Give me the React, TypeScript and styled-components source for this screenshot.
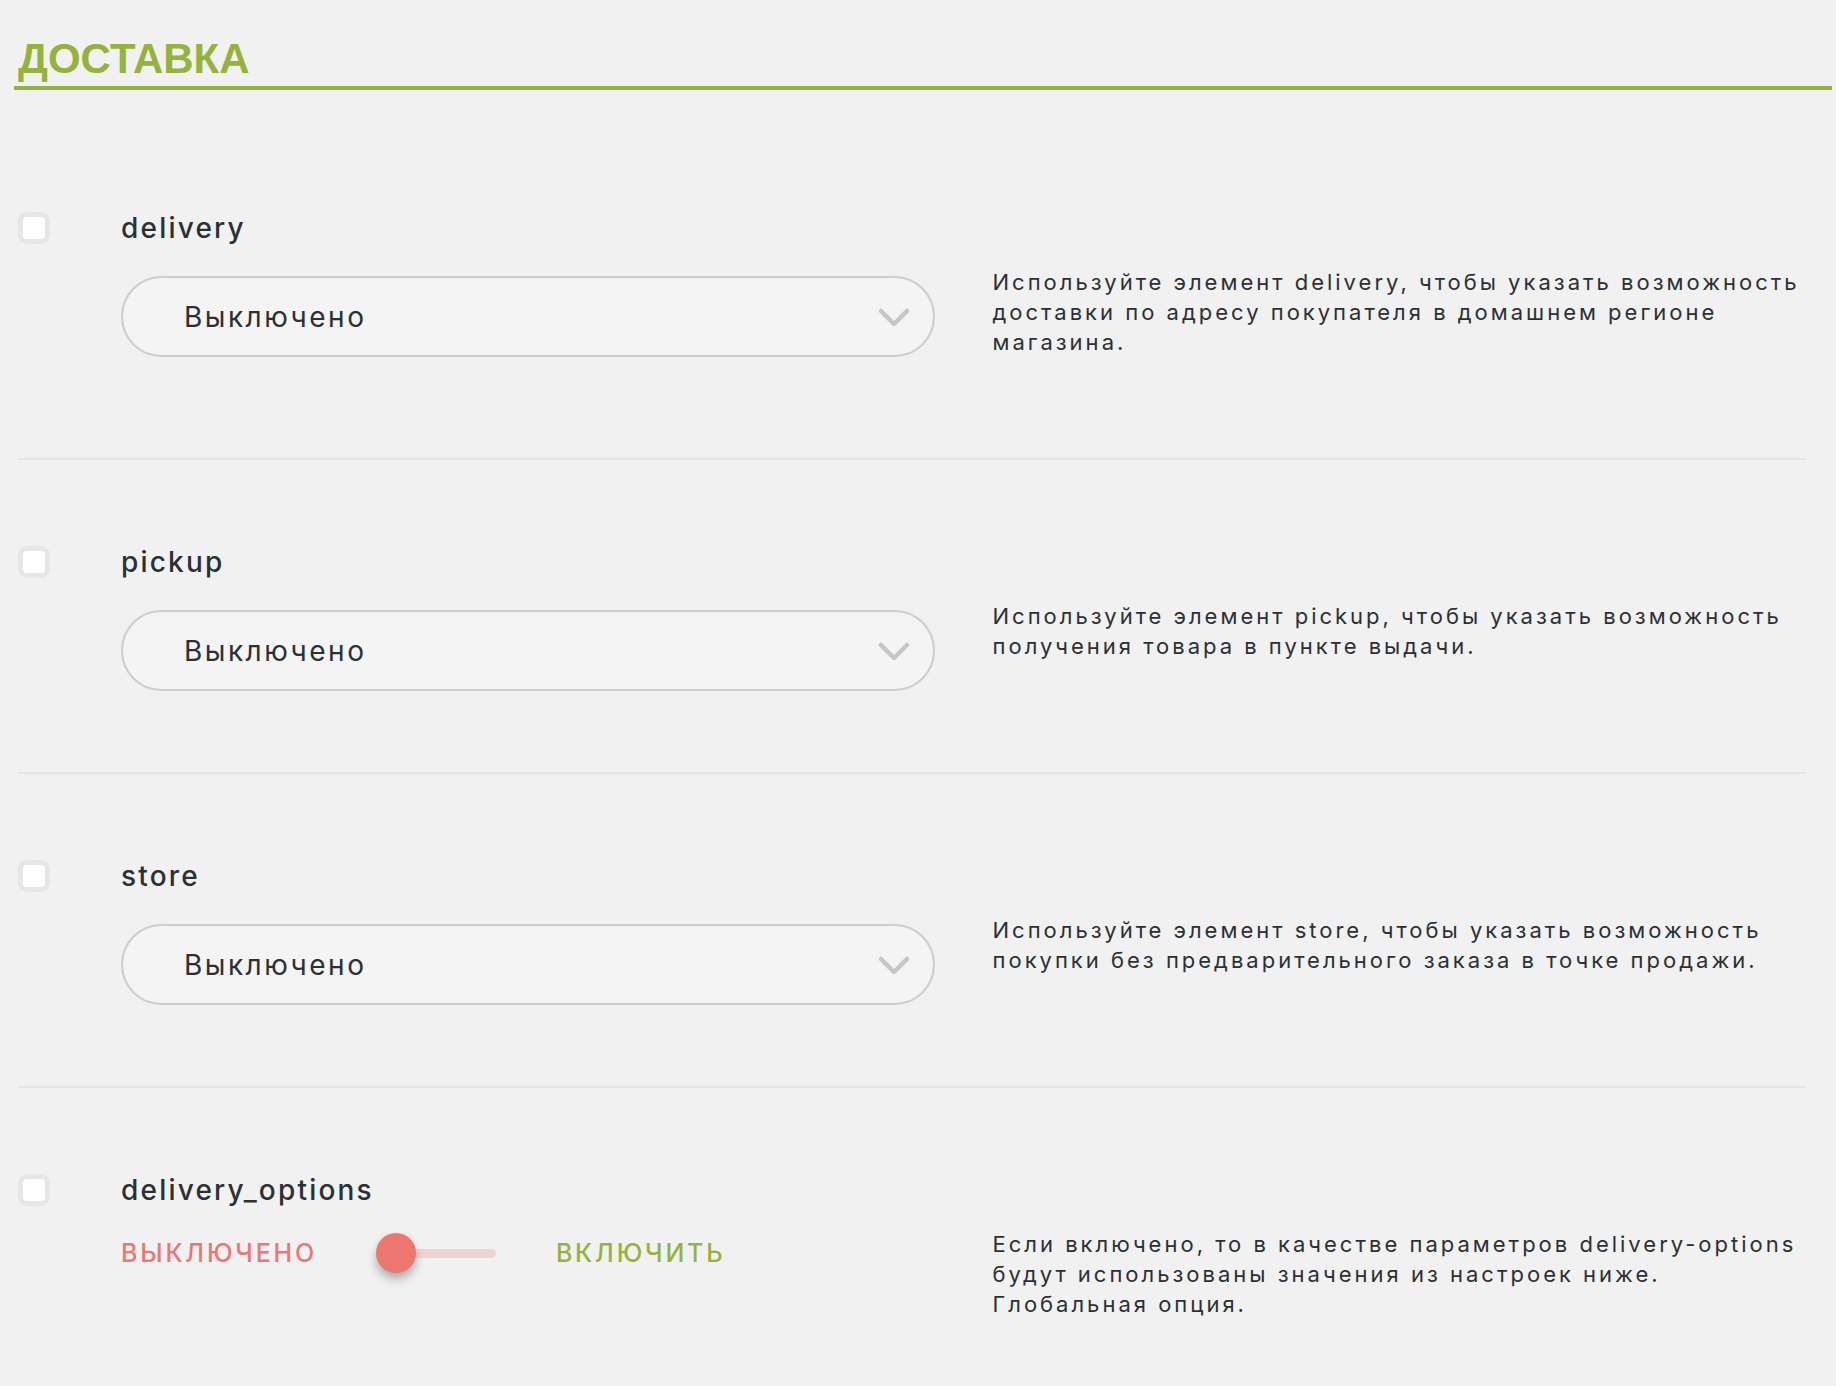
import { createGlobalStyle } from 'styled-components'
import styled from 'styled-components'

const GlobalStyle = createGlobalStyle`
    html, body {
        margin: 0;
        padding: 0;
        background: #f1f1f1;
    }
    body {
        font-family: Inter, "Noto Sans", sans-serif;
        color: #2b3035;
    }
`

const GREEN = '#95b33a'
const RED = '#ec7670'

const Page = styled.div`
    padding: 0 4px 40px 14px;
`

const SectionTitle = styled.h2`
    margin: 38px 0 0;
    padding: 0 0 6px 4px;
    font-family: "Liberation Sans", Arial, sans-serif;
    font-size: 42px;
    line-height: 42px;
    font-weight: 700;
    color: ${GREEN};
    border-bottom: 4px solid ${GREEN};
`

const OptionList = styled.div`
    margin: 36px 0 0 4px;
    width: 1788px;
`

const OptionRow = styled.div<{ $bottom?: number; $last?: boolean }>`
    display: grid;
    grid-template-columns: 45px 1fr 1fr;
    grid-template-rows: 32px auto;
    column-gap: 58px;
    row-gap: 32px;
    padding: 86px 0 ${({ $bottom }) => $bottom ?? 81}px;
    border-bottom: ${({ $last }) => ($last ? 'none' : '2px solid #e4e4e4')};
`

const Check = styled.span`
    grid-column: 1;
    grid-row: 1;
    align-self: center;
    box-sizing: border-box;
    width: 32px;
    height: 32px;
    border: 5px solid #e6e6e6;
    border-radius: 9px;
    background: #fff;
`

const OptionName = styled.div`
    grid-column: 2;
    grid-row: 1;
    font-size: 28px;
    line-height: 32px;
    font-weight: 500;
    letter-spacing: 2.2px;
    color: #2b3035;
`

const Control = styled.div`
    grid-column: 2;
    grid-row: 2;
`

const Description = styled.p`
    grid-column: 3;
    grid-row: 2;
    margin: -9px 0 0;
    font-size: 22px;
    line-height: 30px;
    letter-spacing: 3px;
    color: #2b3035;
`

const SelectBox = styled.div`
    position: relative;
    box-sizing: border-box;
    height: 81px;
    display: flex;
    align-items: center;
    padding: 0 70px 0 61px;
    border: 2px solid #cdcdcd;
    border-radius: 41px;
    background: #f4f4f4;
    font-size: 28px;
    letter-spacing: 2.5px;
    color: #2b3035;
`

const Chevron = styled.svg`
    position: absolute;
    right: 23px;
    top: 50%;
    margin-top: -9px;
`

const ToggleRow = styled.div`
    height: 30px;
    display: flex;
    align-items: center;
`

const ToggleLabel = styled.span<{ $color: string }>`
    font-size: 25px;
    font-weight: 500;
    letter-spacing: 2.8px;
    text-transform: uppercase;
    color: ${({ $color }) => $color};
`

const Switch = styled.span`
    position: relative;
    width: 120px;
    height: 40px;
    margin: 0 60px 0 59px;
    display: flex;
    align-items: center;
`

const SwitchTrack = styled.span`
    width: 100%;
    height: 9px;
    margin-left: 16px;
    border-radius: 5px;
    background: #f2d3d3;
`

const SwitchKnob = styled.span`
    position: absolute;
    left: 0;
    top: 0;
    width: 40px;
    height: 40px;
    border-radius: 50%;
    background: ${RED};
    box-shadow: 0 6px 10px rgba(0, 0, 0, 0.28);
`

type Option = {
    name: string
    description: string
    kind: 'select' | 'toggle'
    bottom?: number
}

const options: Option[] = [
    {
        name: 'delivery',
        description:
            'Используйте элемент delivery, чтобы указать возможность доставки по адресу покупателя в домашнем регионе магазина.',
        kind: 'select',
        bottom: 101,
    },
    {
        name: 'pickup',
        description:
            'Используйте элемент pickup, чтобы указать возможность получения товара в пункте выдачи.',
        kind: 'select',
    },
    {
        name: 'store',
        description:
            'Используйте элемент store, чтобы указать возможность покупки без предварительного заказа в точке продажи.',
        kind: 'select',
    },
    {
        name: 'delivery_options',
        description:
            'Если включено, то в качестве параметров delivery-options будут использованы значения из настроек ниже. Глобальная опция.',
        kind: 'toggle',
    },
]

function Select({ value }: { value: string }) {
    return (
        <SelectBox>
            {value}
            <Chevron width="32" height="20" viewBox="0 0 32 20">
                <polyline
                    points="3,3 16,16 29,3"
                    fill="none"
                    stroke="#c6c6c6"
                    strokeWidth="4.5"
                    strokeLinecap="round"
                    strokeLinejoin="round"
                />
            </Chevron>
        </SelectBox>
    )
}

function Toggle() {
    return (
        <ToggleRow>
            <ToggleLabel $color={RED}>Выключено</ToggleLabel>
            <Switch>
                <SwitchTrack />
                <SwitchKnob />
            </Switch>
            <ToggleLabel $color={GREEN}>Включить</ToggleLabel>
        </ToggleRow>
    )
}

export default function App() {
    return (
        <Page>
            <GlobalStyle />
            <SectionTitle>ДОСТАВКА</SectionTitle>
            <OptionList>
                {options.map((opt, i) => (
                    <OptionRow
                        key={opt.name}
                        $bottom={opt.bottom}
                        $last={i === options.length - 1}
                    >
                        <Check />
                        <OptionName>{opt.name}</OptionName>
                        <Control>
                            {opt.kind === 'select' ? (
                                <Select value="Выключено" />
                            ) : (
                                <Toggle />
                            )}
                        </Control>
                        <Description>{opt.description}</Description>
                    </OptionRow>
                ))}
            </OptionList>
        </Page>
    )
}
